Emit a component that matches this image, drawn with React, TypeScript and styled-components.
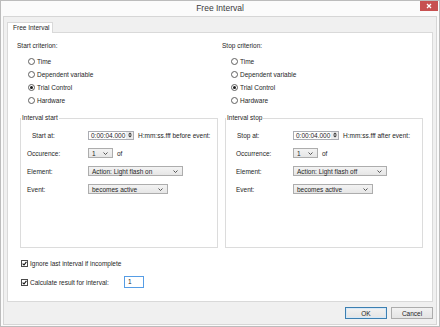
import React from 'react'
import styled, { createGlobalStyle } from 'styled-components'

const GlobalStyle = createGlobalStyle`
  html, body { margin: 0; padding: 0; }
  body {
    width: 440px;
    height: 327px;
    overflow: hidden;
    background: #ffffff;
    font-family: "Liberation Sans", Arial, sans-serif;
    color: #1e1e1e;
  }
  * { box-sizing: border-box; }
`

const Window = styled.div`
  width: 440px;
  height: 327px;
  border: 1px solid #bcbcbc;
  background: #fbfbfb;
  display: flex;
  flex-direction: column;
`

const TitleBar = styled.div`
  flex: none;
  height: 15px;
  display: grid;
  grid-template-columns: 1fr auto 1fr;
  align-items: start;
`

const Title = styled.div`
  grid-column: 2;
  font-size: 8.5px;
  line-height: 15px;
  color: #3a3a3a;
`

const CloseButton = styled.div`
  justify-self: end;
  width: 18px;
  height: 10px;
  margin-right: 1px;
  background: #c75050;
  display: flex;
  align-items: center;
  justify-content: center;
`

const Client = styled.div`
  flex: 1;
  margin: 0 2px 1px;
  border: 1px solid #d6d6d6;
  background: #f0f0f0;
  padding: 5px 3px 0;
  display: flex;
  flex-direction: column;
`

const TabStrip = styled.div`
  display: flex;
`

const Tab = styled.div`
  position: relative;
  z-index: 1;
  width: 46px;
  height: 11px;
  margin-bottom: -1px;
  border: 1px solid #d9d9d9;
  border-bottom: none;
  background: #ffffff;
  font-size: 6.5px;
  line-height: 10px;
  padding-left: 5px;
`

const TabPanel = styled.div`
  height: 270px;
  border: 1px solid #d9d9d9;
  background: #ffffff;
  padding: 9px 0 0 12px;
`

const Columns = styled.div`
  display: grid;
  grid-template-columns: 198px 198px;
  column-gap: 7px;
`

const Column = styled.div`
  display: flex;
  flex-direction: column;
`

const Caption = styled.div`
  font-size: 6.5px;
  line-height: 8px;
  margin-left: -3px;
`

const RadioList = styled.div<{ $indent: number }>`
  display: flex;
  flex-direction: column;
  gap: 5px;
  margin-top: 7px;
  padding-left: ${p => p.$indent}px;
`

const RadioRow = styled.div`
  display: flex;
  align-items: center;
  gap: 2px;
  height: 8px;
  font-size: 6.5px;
`

const RadioCircle = styled.span<{ $on?: boolean }>`
  width: 7px;
  height: 7px;
  border-radius: 50%;
  border: 1px solid #5f5f5f;
  background: #fff;
  display: flex;
  align-items: center;
  justify-content: center;
  &::after {
    content: '';
    width: 3px;
    height: 3px;
    border-radius: 50%;
    background: ${p => (p.$on ? '#1a1a1a' : 'transparent')};
  }
`

const GroupBox = styled.fieldset`
  margin: 10px 0 0;
  padding: 0;
  height: 134px;
  border: 1px solid #dcdcdc;
  min-width: 0;
`

const GroupTitle = styled.legend`
  font-size: 6.5px;
  line-height: 8px;
  padding: 0 1px;
`

const FormGrid = styled.div<{ $pad: number; $labelWidth: number }>`
  display: grid;
  grid-template-columns: ${p => p.$labelWidth}px auto;
  grid-auto-rows: 10px;
  row-gap: 8px;
  align-items: center;
  padding: 8px 0 0 ${p => p.$pad}px;
`

const FieldLabel = styled.div<{ $shift?: number }>`
  font-size: 6.5px;
  margin-left: ${p => p.$shift || 0}px;
`

const FieldCell = styled.div`
  display: flex;
  align-items: center;
  gap: 4px;
  font-size: 6.5px;
`

const Spinner = styled.div`
  width: 46px;
  height: 9px;
  border: 1px solid #abadb3;
  background: #fff;
  display: flex;
  align-items: center;
`

const SpinText = styled.span`
  flex: 1;
  font-size: 6.5px;
  padding-left: 2px;
`

const SpinButtons = styled.span`
  width: 7px;
  height: 100%;
  display: flex;
  align-items: center;
  justify-content: center;
  background: #ececec;
`

const Combo = styled.div<{ $width: number }>`
  width: ${p => p.$width}px;
  height: 10px;
  border: 1px solid #adadad;
  background: linear-gradient(#f3f3f3, #e6e6e6);
  display: flex;
  align-items: center;
  justify-content: space-between;
  padding: 0 4px 0 3px;
  font-size: 6.5px;
`

const Options = styled.div`
  display: flex;
  flex-direction: column;
  margin-top: 11px;
  padding-left: 1px;
`

const CheckRow = styled.div<{ $height: number }>`
  display: flex;
  align-items: center;
  gap: 2px;
  height: ${p => p.$height}px;
  font-size: 6.5px;
  & + & {
    margin-top: 9px;
  }
`

const CheckBox = styled.span`
  width: 7px;
  height: 7px;
  border: 1px solid #4a4a4a;
  background: #fff;
  display: flex;
  align-items: center;
  justify-content: center;
`

const CheckLabel = styled.span<{ $width?: number }>`
  width: ${p => (p.$width ? `${p.$width}px` : 'auto')};
`

const NumberInput = styled.div`
  width: 20px;
  height: 12px;
  border: 1px solid #569de5;
  background: #fff;
  font-size: 6.5px;
  line-height: 10px;
  padding-left: 3px;
`

const Footer = styled.div`
  display: flex;
  justify-content: flex-end;
  gap: 4px;
  margin-top: 5px;
`

const Button = styled.div<{ $default?: boolean }>`
  width: 42px;
  height: 12px;
  border: 1px solid ${p => (p.$default ? '#3c7fb1' : '#acacac')};
  box-shadow: ${p => (p.$default ? 'inset 0 0 0 1px #d6e8f7' : 'none')};
  background: linear-gradient(#f2f2f2, #e4e4e4);
  font-size: 6.5px;
  display: flex;
  align-items: center;
  justify-content: center;
`

const Chevron = () => (
  <svg width="5" height="3" viewBox="0 0 5 3">
    <path d="M0.5 0.5 L2.5 2.5 L4.5 0.5" fill="none" stroke="#444" strokeWidth="0.9" />
  </svg>
)

const SpinArrows = () => (
  <svg width="4" height="6" viewBox="0 0 4 6">
    <path d="M0 2.5 L2 0.5 L4 2.5 Z M0 3.5 L2 5.5 L4 3.5 Z" fill="#333" />
  </svg>
)

const Tick = () => (
  <svg width="5" height="5" viewBox="0 0 5 5">
    <path d="M0.6 2.6 L2 4 L4.4 0.9" fill="none" stroke="#111" strokeWidth="1.1" />
  </svg>
)

const criteria = ['Time', 'Dependent variable', 'Trial Control', 'Hardware']

type SideProps = {
  caption: string
  group: string
  atLabel: string
  occurrence: string
  unit: string
  element: string
  elementWidth: number
  indent: number
  pad: number
  labelWidth: number
  atShift: number
}

const Side = (p: SideProps) => (
  <Column>
    <Caption>{p.caption}</Caption>
    <RadioList $indent={p.indent}>
      {criteria.map(c => (
        <RadioRow key={c}>
          <RadioCircle $on={c === 'Trial Control'} />
          {c}
        </RadioRow>
      ))}
    </RadioList>
    <GroupBox>
      <GroupTitle>{p.group}</GroupTitle>
      <FormGrid $pad={p.pad} $labelWidth={p.labelWidth}>
        <FieldLabel $shift={p.atShift}>{p.atLabel}</FieldLabel>
        <FieldCell>
          <Spinner>
            <SpinText>0:00:04.000</SpinText>
            <SpinButtons><SpinArrows /></SpinButtons>
          </Spinner>
          {p.unit}
        </FieldCell>
        <FieldLabel>{p.occurrence}</FieldLabel>
        <FieldCell>
          <Combo $width={25}>1<Chevron /></Combo>
          of
        </FieldCell>
        <FieldLabel>Element:</FieldLabel>
        <FieldCell>
          <Combo $width={p.elementWidth}>{p.element}<Chevron /></Combo>
        </FieldCell>
        <FieldLabel>Event:</FieldLabel>
        <FieldCell>
          <Combo $width={80}>becomes active<Chevron /></Combo>
        </FieldCell>
      </FormGrid>
    </GroupBox>
  </Column>
)

export default function App() {
  return (
    <>
      <GlobalStyle />
      <Window>
        <TitleBar>
          <Title>Free Interval</Title>
          <CloseButton>
            <svg width="6" height="6" viewBox="0 0 6 6">
              <path d="M1 1 L5 5 M5 1 L1 5" stroke="#fff" strokeWidth="1.3" />
            </svg>
          </CloseButton>
        </TitleBar>
        <Client>
          <TabStrip>
            <Tab>Free Interval</Tab>
          </TabStrip>
          <TabPanel>
            <Columns>
              <Side
                caption="Start criterion:"
                group="Interval start"
                atLabel="Start at:"
                occurrence="Occurence:"
                unit="H:mm:ss.fff before event:"
                element="Action: Light flash on"
                elementWidth={95}
                indent={8}
                pad={6}
                labelWidth={61}
                atShift={5}
              />
              <Side
                caption="Stop criterion:"
                group="Interval stop"
                atLabel="Stop at:"
                occurrence="Occurrence:"
                unit="H:mm:ss.fff after event:"
                element="Action: Light flash off"
                elementWidth={94}
                indent={6}
                pad={10}
                labelWidth={57}
                atShift={1}
              />
            </Columns>
            <Options>
              <CheckRow $height={8}>
                <CheckBox><Tick /></CheckBox>
                <CheckLabel>Ignore last interval if incomplete</CheckLabel>
              </CheckRow>
              <CheckRow $height={12}>
                <CheckBox><Tick /></CheckBox>
                <CheckLabel $width={92}>Calculate result for interval:</CheckLabel>
                <NumberInput>1</NumberInput>
              </CheckRow>
            </Options>
          </TabPanel>
          <Footer>
            <Button $default>OK</Button>
            <Button>Cancel</Button>
          </Footer>
        </Client>
      </Window>
    </>
  )
}
